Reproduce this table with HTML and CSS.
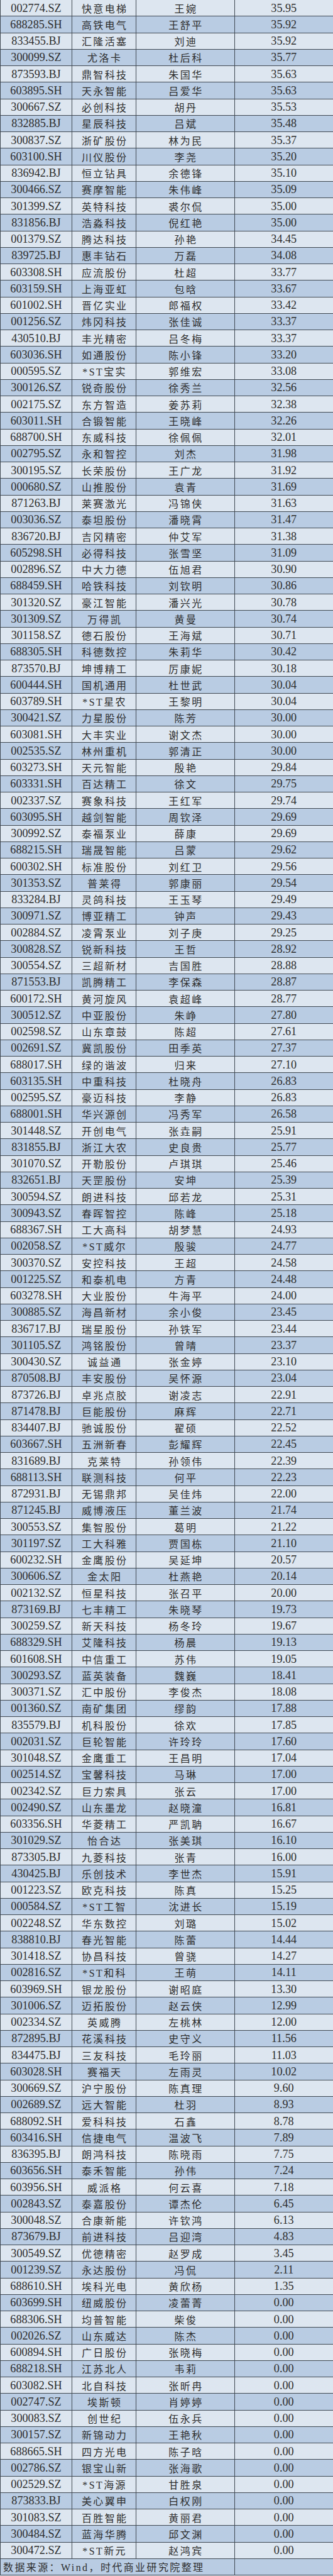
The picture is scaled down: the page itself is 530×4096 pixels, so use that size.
FILE: index.html
```html
<!DOCTYPE html>
<html lang="zh-CN">
<head>
<meta charset="utf-8">
<title>表</title>
<link rel="stylesheet" href="styles.css">
</head>
<body>
<div class="tbl">
<div class="row"><span class="c">002774.SZ</span><span class="n">快意电梯</span><span class="p">王婉</span><span class="v">35.95</span></div>
<div class="row"><span class="c">688285.SH</span><span class="n">高铁电气</span><span class="p">王舒平</span><span class="v">35.92</span></div>
<div class="row"><span class="c">833455.BJ</span><span class="n">汇隆活塞</span><span class="p">刘迪</span><span class="v">35.92</span></div>
<div class="row"><span class="c">300099.SZ</span><span class="n">尤洛卡</span><span class="p">杜后科</span><span class="v">35.77</span></div>
<div class="row"><span class="c">873593.BJ</span><span class="n">鼎智科技</span><span class="p">朱国华</span><span class="v">35.63</span></div>
<div class="row"><span class="c">603895.SH</span><span class="n">天永智能</span><span class="p">吕爱华</span><span class="v">35.63</span></div>
<div class="row"><span class="c">300667.SZ</span><span class="n">必创科技</span><span class="p">胡丹</span><span class="v">35.53</span></div>
<div class="row"><span class="c">832885.BJ</span><span class="n">星辰科技</span><span class="p">吕斌</span><span class="v">35.48</span></div>
<div class="row"><span class="c">300837.SZ</span><span class="n">浙矿股份</span><span class="p">林为民</span><span class="v">35.37</span></div>
<div class="row"><span class="c">603100.SH</span><span class="n">川仪股份</span><span class="p">李尧</span><span class="v">35.20</span></div>
<div class="row"><span class="c">836942.BJ</span><span class="n">恒立钻具</span><span class="p">余德锋</span><span class="v">35.10</span></div>
<div class="row"><span class="c">300466.SZ</span><span class="n">赛摩智能</span><span class="p">朱伟峰</span><span class="v">35.09</span></div>
<div class="row"><span class="c">301399.SZ</span><span class="n">英特科技</span><span class="p">裘尔侃</span><span class="v">35.00</span></div>
<div class="row"><span class="c">831856.BJ</span><span class="n">浩淼科技</span><span class="p">倪红艳</span><span class="v">35.00</span></div>
<div class="row"><span class="c">001379.SZ</span><span class="n">腾达科技</span><span class="p">孙艳</span><span class="v">34.45</span></div>
<div class="row"><span class="c">839725.BJ</span><span class="n">惠丰钻石</span><span class="p">万磊</span><span class="v">34.08</span></div>
<div class="row"><span class="c">603308.SH</span><span class="n">应流股份</span><span class="p">杜超</span><span class="v">33.77</span></div>
<div class="row"><span class="c">603159.SH</span><span class="n">上海亚虹</span><span class="p">包晗</span><span class="v">33.67</span></div>
<div class="row"><span class="c">601002.SH</span><span class="n">晋亿实业</span><span class="p">郎福权</span><span class="v">33.42</span></div>
<div class="row"><span class="c">001256.SZ</span><span class="n">炜冈科技</span><span class="p">张佳诚</span><span class="v">33.37</span></div>
<div class="row"><span class="c">430510.BJ</span><span class="n">丰光精密</span><span class="p">吕冬梅</span><span class="v">33.37</span></div>
<div class="row"><span class="c">603036.SH</span><span class="n">如通股份</span><span class="p">陈小锋</span><span class="v">33.20</span></div>
<div class="row"><span class="c">000595.SZ</span><span class="n">*ST宝实</span><span class="p">郭维宏</span><span class="v">33.08</span></div>
<div class="row"><span class="c">300126.SZ</span><span class="n">锐奇股份</span><span class="p">徐秀兰</span><span class="v">32.56</span></div>
<div class="row"><span class="c">002175.SZ</span><span class="n">东方智造</span><span class="p">姜苏莉</span><span class="v">32.38</span></div>
<div class="row"><span class="c">603011.SH</span><span class="n">合锻智能</span><span class="p">王晓峰</span><span class="v">32.26</span></div>
<div class="row"><span class="c">688700.SH</span><span class="n">东威科技</span><span class="p">徐佩佩</span><span class="v">32.01</span></div>
<div class="row"><span class="c">002795.SZ</span><span class="n">永和智控</span><span class="p">刘杰</span><span class="v">31.98</span></div>
<div class="row"><span class="c">300195.SZ</span><span class="n">长荣股份</span><span class="p">王广龙</span><span class="v">31.92</span></div>
<div class="row"><span class="c">000680.SZ</span><span class="n">山推股份</span><span class="p">袁青</span><span class="v">31.69</span></div>
<div class="row"><span class="c">871263.BJ</span><span class="n">莱赛激光</span><span class="p">冯锦侠</span><span class="v">31.63</span></div>
<div class="row"><span class="c">003036.SZ</span><span class="n">泰坦股份</span><span class="p">潘晓霄</span><span class="v">31.47</span></div>
<div class="row"><span class="c">836720.BJ</span><span class="n">吉冈精密</span><span class="p">仲艾军</span><span class="v">31.38</span></div>
<div class="row"><span class="c">605298.SH</span><span class="n">必得科技</span><span class="p">张雪坚</span><span class="v">31.09</span></div>
<div class="row"><span class="c">002896.SZ</span><span class="n">中大力德</span><span class="p">伍旭君</span><span class="v">30.90</span></div>
<div class="row"><span class="c">688459.SH</span><span class="n">哈铁科技</span><span class="p">刘钦明</span><span class="v">30.86</span></div>
<div class="row"><span class="c">301320.SZ</span><span class="n">豪江智能</span><span class="p">潘兴光</span><span class="v">30.78</span></div>
<div class="row"><span class="c">301309.SZ</span><span class="n">万得凯</span><span class="p">黄曼</span><span class="v">30.74</span></div>
<div class="row"><span class="c">301158.SZ</span><span class="n">德石股份</span><span class="p">王海斌</span><span class="v">30.71</span></div>
<div class="row"><span class="c">688305.SH</span><span class="n">科德数控</span><span class="p">朱莉华</span><span class="v">30.42</span></div>
<div class="row"><span class="c">873570.BJ</span><span class="n">坤博精工</span><span class="p">厉康妮</span><span class="v">30.18</span></div>
<div class="row"><span class="c">600444.SH</span><span class="n">国机通用</span><span class="p">杜世武</span><span class="v">30.04</span></div>
<div class="row"><span class="c">603789.SH</span><span class="n">*ST星农</span><span class="p">王黎明</span><span class="v">30.04</span></div>
<div class="row"><span class="c">300421.SZ</span><span class="n">力星股份</span><span class="p">陈芳</span><span class="v">30.00</span></div>
<div class="row"><span class="c">603081.SH</span><span class="n">大丰实业</span><span class="p">谢文杰</span><span class="v">30.00</span></div>
<div class="row"><span class="c">002535.SZ</span><span class="n">林州重机</span><span class="p">郭清正</span><span class="v">30.00</span></div>
<div class="row"><span class="c">603273.SH</span><span class="n">天元智能</span><span class="p">殷艳</span><span class="v">29.84</span></div>
<div class="row"><span class="c">603331.SH</span><span class="n">百达精工</span><span class="p">徐文</span><span class="v">29.75</span></div>
<div class="row"><span class="c">002337.SZ</span><span class="n">赛象科技</span><span class="p">王红军</span><span class="v">29.74</span></div>
<div class="row"><span class="c">603095.SH</span><span class="n">越剑智能</span><span class="p">周钦泽</span><span class="v">29.69</span></div>
<div class="row"><span class="c">300992.SZ</span><span class="n">泰福泵业</span><span class="p">薛康</span><span class="v">29.69</span></div>
<div class="row"><span class="c">688215.SH</span><span class="n">瑞晟智能</span><span class="p">吕蒙</span><span class="v">29.62</span></div>
<div class="row"><span class="c">600302.SH</span><span class="n">标准股份</span><span class="p">刘红卫</span><span class="v">29.56</span></div>
<div class="row"><span class="c">301353.SZ</span><span class="n">普莱得</span><span class="p">郭康丽</span><span class="v">29.54</span></div>
<div class="row"><span class="c">833284.BJ</span><span class="n">灵鸽科技</span><span class="p">王玉琴</span><span class="v">29.49</span></div>
<div class="row"><span class="c">300971.SZ</span><span class="n">博亚精工</span><span class="p">钟声</span><span class="v">29.43</span></div>
<div class="row"><span class="c">002884.SZ</span><span class="n">凌霄泵业</span><span class="p">刘子庚</span><span class="v">29.25</span></div>
<div class="row"><span class="c">300828.SZ</span><span class="n">锐新科技</span><span class="p">王哲</span><span class="v">28.92</span></div>
<div class="row"><span class="c">300554.SZ</span><span class="n">三超新材</span><span class="p">吉国胜</span><span class="v">28.88</span></div>
<div class="row"><span class="c">871553.BJ</span><span class="n">凯腾精工</span><span class="p">李保森</span><span class="v">28.87</span></div>
<div class="row"><span class="c">600172.SH</span><span class="n">黄河旋风</span><span class="p">袁超峰</span><span class="v">28.77</span></div>
<div class="row"><span class="c">300512.SZ</span><span class="n">中亚股份</span><span class="p">朱峥</span><span class="v">27.80</span></div>
<div class="row"><span class="c">002598.SZ</span><span class="n">山东章鼓</span><span class="p">陈超</span><span class="v">27.61</span></div>
<div class="row"><span class="c">002691.SZ</span><span class="n">冀凯股份</span><span class="p">田季英</span><span class="v">27.37</span></div>
<div class="row"><span class="c">688017.SH</span><span class="n">绿的谐波</span><span class="p">归来</span><span class="v">27.10</span></div>
<div class="row"><span class="c">603135.SH</span><span class="n">中重科技</span><span class="p">杜晓舟</span><span class="v">26.83</span></div>
<div class="row"><span class="c">002595.SZ</span><span class="n">豪迈科技</span><span class="p">李静</span><span class="v">26.83</span></div>
<div class="row"><span class="c">688001.SH</span><span class="n">华兴源创</span><span class="p">冯秀军</span><span class="v">26.58</span></div>
<div class="row"><span class="c">301448.SZ</span><span class="n">开创电气</span><span class="p">张垚嗣</span><span class="v">25.91</span></div>
<div class="row"><span class="c">831855.BJ</span><span class="n">浙江大农</span><span class="p">史良贵</span><span class="v">25.77</span></div>
<div class="row"><span class="c">301070.SZ</span><span class="n">开勒股份</span><span class="p">卢琪琪</span><span class="v">25.46</span></div>
<div class="row"><span class="c">832651.BJ</span><span class="n">天罡股份</span><span class="p">安坤</span><span class="v">25.39</span></div>
<div class="row"><span class="c">300594.SZ</span><span class="n">朗进科技</span><span class="p">邱若龙</span><span class="v">25.31</span></div>
<div class="row"><span class="c">300943.SZ</span><span class="n">春晖智控</span><span class="p">陈峰</span><span class="v">25.18</span></div>
<div class="row"><span class="c">688367.SH</span><span class="n">工大高科</span><span class="p">胡梦慧</span><span class="v">24.93</span></div>
<div class="row"><span class="c">002058.SZ</span><span class="n">*ST威尔</span><span class="p">殷骏</span><span class="v">24.77</span></div>
<div class="row"><span class="c">300370.SZ</span><span class="n">安控科技</span><span class="p">王超</span><span class="v">24.58</span></div>
<div class="row"><span class="c">001225.SZ</span><span class="n">和泰机电</span><span class="p">方青</span><span class="v">24.48</span></div>
<div class="row"><span class="c">603278.SH</span><span class="n">大业股份</span><span class="p">牛海平</span><span class="v">24.00</span></div>
<div class="row"><span class="c">300885.SZ</span><span class="n">海昌新材</span><span class="p">余小俊</span><span class="v">23.45</span></div>
<div class="row"><span class="c">836717.BJ</span><span class="n">瑞星股份</span><span class="p">孙铁军</span><span class="v">23.44</span></div>
<div class="row"><span class="c">301105.SZ</span><span class="n">鸿铭股份</span><span class="p">曾晴</span><span class="v">23.37</span></div>
<div class="row"><span class="c">300430.SZ</span><span class="n">诚益通</span><span class="p">张金婷</span><span class="v">23.10</span></div>
<div class="row"><span class="c">870508.BJ</span><span class="n">丰安股份</span><span class="p">吴怀源</span><span class="v">23.04</span></div>
<div class="row"><span class="c">873726.BJ</span><span class="n">卓兆点胶</span><span class="p">谢凌志</span><span class="v">22.91</span></div>
<div class="row"><span class="c">871478.BJ</span><span class="n">巨能股份</span><span class="p">麻辉</span><span class="v">22.71</span></div>
<div class="row"><span class="c">834407.BJ</span><span class="n">驰诚股份</span><span class="p">翟硕</span><span class="v">22.52</span></div>
<div class="row"><span class="c">603667.SH</span><span class="n">五洲新春</span><span class="p">彭耀辉</span><span class="v">22.45</span></div>
<div class="row"><span class="c">831689.BJ</span><span class="n">克莱特</span><span class="p">孙领伟</span><span class="v">22.39</span></div>
<div class="row"><span class="c">688113.SH</span><span class="n">联测科技</span><span class="p">何平</span><span class="v">22.23</span></div>
<div class="row"><span class="c">872931.BJ</span><span class="n">无锡鼎邦</span><span class="p">吴佳炜</span><span class="v">22.00</span></div>
<div class="row"><span class="c">871245.BJ</span><span class="n">威博液压</span><span class="p">董兰波</span><span class="v">21.74</span></div>
<div class="row"><span class="c">300553.SZ</span><span class="n">集智股份</span><span class="p">葛明</span><span class="v">21.22</span></div>
<div class="row"><span class="c">301197.SZ</span><span class="n">工大科雅</span><span class="p">贾国栋</span><span class="v">21.10</span></div>
<div class="row"><span class="c">600232.SH</span><span class="n">金鹰股份</span><span class="p">吴延坤</span><span class="v">20.57</span></div>
<div class="row"><span class="c">300606.SZ</span><span class="n">金太阳</span><span class="p">杜燕艳</span><span class="v">20.14</span></div>
<div class="row"><span class="c">002132.SZ</span><span class="n">恒星科技</span><span class="p">张召平</span><span class="v">20.00</span></div>
<div class="row"><span class="c">873169.BJ</span><span class="n">七丰精工</span><span class="p">朱晓琴</span><span class="v">19.73</span></div>
<div class="row"><span class="c">300259.SZ</span><span class="n">新天科技</span><span class="p">杨冬玲</span><span class="v">19.67</span></div>
<div class="row"><span class="c">688329.SH</span><span class="n">艾隆科技</span><span class="p">杨晨</span><span class="v">19.13</span></div>
<div class="row"><span class="c">601608.SH</span><span class="n">中信重工</span><span class="p">苏伟</span><span class="v">19.05</span></div>
<div class="row"><span class="c">300293.SZ</span><span class="n">蓝英装备</span><span class="p">魏巍</span><span class="v">18.41</span></div>
<div class="row"><span class="c">300371.SZ</span><span class="n">汇中股份</span><span class="p">李俊杰</span><span class="v">18.08</span></div>
<div class="row"><span class="c">001360.SZ</span><span class="n">南矿集团</span><span class="p">缪韵</span><span class="v">17.88</span></div>
<div class="row"><span class="c">835579.BJ</span><span class="n">机科股份</span><span class="p">徐欢</span><span class="v">17.85</span></div>
<div class="row"><span class="c">002031.SZ</span><span class="n">巨轮智能</span><span class="p">许玲玲</span><span class="v">17.60</span></div>
<div class="row"><span class="c">301048.SZ</span><span class="n">金鹰重工</span><span class="p">王昌明</span><span class="v">17.04</span></div>
<div class="row"><span class="c">002514.SZ</span><span class="n">宝馨科技</span><span class="p">马琳</span><span class="v">17.00</span></div>
<div class="row"><span class="c">002342.SZ</span><span class="n">巨力索具</span><span class="p">张云</span><span class="v">17.00</span></div>
<div class="row"><span class="c">002490.SZ</span><span class="n">山东墨龙</span><span class="p">赵晓潼</span><span class="v">16.81</span></div>
<div class="row"><span class="c">603356.SH</span><span class="n">华菱精工</span><span class="p">严凯聃</span><span class="v">16.67</span></div>
<div class="row"><span class="c">301029.SZ</span><span class="n">怡合达</span><span class="p">张美琪</span><span class="v">16.10</span></div>
<div class="row"><span class="c">873305.BJ</span><span class="n">九菱科技</span><span class="p">张青</span><span class="v">16.00</span></div>
<div class="row"><span class="c">430425.BJ</span><span class="n">乐创技术</span><span class="p">李世杰</span><span class="v">15.91</span></div>
<div class="row"><span class="c">001223.SZ</span><span class="n">欧克科技</span><span class="p">陈真</span><span class="v">15.25</span></div>
<div class="row"><span class="c">000584.SZ</span><span class="n">*ST工智</span><span class="p">沈进长</span><span class="v">15.19</span></div>
<div class="row"><span class="c">002248.SZ</span><span class="n">华东数控</span><span class="p">刘璐</span><span class="v">15.02</span></div>
<div class="row"><span class="c">838810.BJ</span><span class="n">春光智能</span><span class="p">陈蕾</span><span class="v">14.44</span></div>
<div class="row"><span class="c">301418.SZ</span><span class="n">协昌科技</span><span class="p">曾骁</span><span class="v">14.27</span></div>
<div class="row"><span class="c">002816.SZ</span><span class="n">*ST和科</span><span class="p">王萌</span><span class="v">14.11</span></div>
<div class="row"><span class="c">603969.SH</span><span class="n">银龙股份</span><span class="p">谢昭庭</span><span class="v">13.30</span></div>
<div class="row"><span class="c">301006.SZ</span><span class="n">迈拓股份</span><span class="p">赵云侠</span><span class="v">12.99</span></div>
<div class="row"><span class="c">002334.SZ</span><span class="n">英威腾</span><span class="p">左桃林</span><span class="v">12.00</span></div>
<div class="row"><span class="c">872895.BJ</span><span class="n">花溪科技</span><span class="p">史守义</span><span class="v">11.56</span></div>
<div class="row"><span class="c">834475.BJ</span><span class="n">三友科技</span><span class="p">毛玲丽</span><span class="v">11.03</span></div>
<div class="row"><span class="c">603028.SH</span><span class="n">赛福天</span><span class="p">左雨灵</span><span class="v">10.02</span></div>
<div class="row"><span class="c">300669.SZ</span><span class="n">沪宁股份</span><span class="p">陈真理</span><span class="v">9.60</span></div>
<div class="row"><span class="c">002689.SZ</span><span class="n">远大智能</span><span class="p">杜羽</span><span class="v">8.93</span></div>
<div class="row"><span class="c">688092.SH</span><span class="n">爱科科技</span><span class="p">石鑫</span><span class="v">8.78</span></div>
<div class="row"><span class="c">603416.SH</span><span class="n">信捷电气</span><span class="p">温波飞</span><span class="v">7.89</span></div>
<div class="row"><span class="c">836395.BJ</span><span class="n">朗鸿科技</span><span class="p">陈晓雨</span><span class="v">7.75</span></div>
<div class="row"><span class="c">603656.SH</span><span class="n">泰禾智能</span><span class="p">孙伟</span><span class="v">7.24</span></div>
<div class="row"><span class="c">603956.SH</span><span class="n">威派格</span><span class="p">何云喜</span><span class="v">7.18</span></div>
<div class="row"><span class="c">002843.SZ</span><span class="n">泰嘉股份</span><span class="p">谭杰伦</span><span class="v">6.45</span></div>
<div class="row"><span class="c">300048.SZ</span><span class="n">合康新能</span><span class="p">许钦鸿</span><span class="v">6.13</span></div>
<div class="row"><span class="c">873679.BJ</span><span class="n">前进科技</span><span class="p">吕迎湾</span><span class="v">4.83</span></div>
<div class="row"><span class="c">300549.SZ</span><span class="n">优德精密</span><span class="p">赵罗成</span><span class="v">3.45</span></div>
<div class="row"><span class="c">001239.SZ</span><span class="n">永达股份</span><span class="p">冯侃</span><span class="v">2.11</span></div>
<div class="row"><span class="c">688610.SH</span><span class="n">埃科光电</span><span class="p">黄欣杨</span><span class="v">1.35</span></div>
<div class="row"><span class="c">603699.SH</span><span class="n">纽威股份</span><span class="p">凌蕾菁</span><span class="v">0.00</span></div>
<div class="row"><span class="c">688306.SH</span><span class="n">均普智能</span><span class="p">柴俊</span><span class="v">0.00</span></div>
<div class="row"><span class="c">002026.SZ</span><span class="n">山东威达</span><span class="p">陈杰</span><span class="v">0.00</span></div>
<div class="row"><span class="c">600894.SH</span><span class="n">广日股份</span><span class="p">张晓梅</span><span class="v">0.00</span></div>
<div class="row"><span class="c">688218.SH</span><span class="n">江苏北人</span><span class="p">韦莉</span><span class="v">0.00</span></div>
<div class="row"><span class="c">603082.SH</span><span class="n">北自科技</span><span class="p">张昕冉</span><span class="v">0.00</span></div>
<div class="row"><span class="c">002747.SZ</span><span class="n">埃斯顿</span><span class="p">肖婷婷</span><span class="v">0.00</span></div>
<div class="row"><span class="c">300083.SZ</span><span class="n">创世纪</span><span class="p">伍永兵</span><span class="v">0.00</span></div>
<div class="row"><span class="c">300157.SZ</span><span class="n">新锦动力</span><span class="p">王艳秋</span><span class="v">0.00</span></div>
<div class="row"><span class="c">688665.SH</span><span class="n">四方光电</span><span class="p">陈子晗</span><span class="v">0.00</span></div>
<div class="row"><span class="c">002786.SZ</span><span class="n">银宝山新</span><span class="p">张海歌</span><span class="v">0.00</span></div>
<div class="row"><span class="c">002529.SZ</span><span class="n">*ST海源</span><span class="p">甘胜泉</span><span class="v">0.00</span></div>
<div class="row"><span class="c">873833.BJ</span><span class="n">美心翼申</span><span class="p">白权刚</span><span class="v">0.00</span></div>
<div class="row"><span class="c">301083.SZ</span><span class="n">百胜智能</span><span class="p">黄丽君</span><span class="v">0.00</span></div>
<div class="row"><span class="c">300484.SZ</span><span class="n">蓝海华腾</span><span class="p">邱文渊</span><span class="v">0.00</span></div>
<div class="row"><span class="c">300472.SZ</span><span class="n">*ST新元</span><span class="p">赵鸿宾</span><span class="v">0.00</span></div>
<div class="row foot"><span class="src">数据来源：Wind，时代商业研究院整理</span><span class="v"></span></div>
</div>
</body>
</html>
```
FILE: styles.css
```css
html, body {
  margin: 0;
  padding: 0;
  background: #dde6f0;
}
.tbl {
  width: 530px;
  border-left: 1px solid #404952;
  box-sizing: border-box;
  font-family: "Liberation Serif", "Noto Sans CJK SC", serif;
  color: #2e2e2e;
}
.row {
  display: grid;
  grid-template-columns: 114px 102px 156.5px 1fr;
  height: 26.25px;
  box-sizing: border-box;
  border-bottom: 1px solid #404952;
  background: #dde6f0;
}
.row:nth-child(even) {
  background: #b9cce3;
}
.row > span {
  display: flex;
  align-items: center;
  justify-content: center;
  border-right: 1px solid #404952;
  white-space: nowrap;
  overflow: hidden;
}
.row > span:last-child {
  border-right: none;
}
.c, .v {
  font-size: 18.2px;
  padding-top: 1px;
}
.n, .p {
  font-size: 16px;
  letter-spacing: 2.4px;
  padding-left: 2.4px;
}
.foot .src {
  grid-column: 1 / 4;
  justify-content: flex-start;
  padding-left: 4px;
  font-size: 16px;
  letter-spacing: 2.4px;
}
```
